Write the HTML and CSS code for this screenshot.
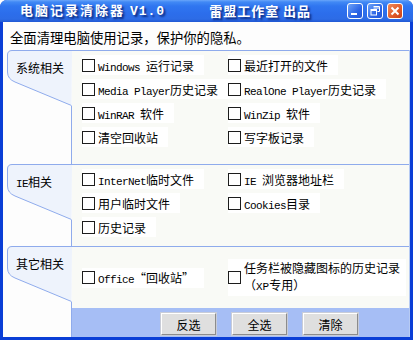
FILE: index.html
```html
<!doctype html>
<html lang="zh-CN">
  <head>
    <meta charset="UTF-8">
    <title>电脑记录清除器 V1.0</title>
    <link rel="stylesheet" href="styles.css">
  </head>
  <body>
<div class="window">
  <div class="titlebar">
    <span class="title">电脑记录清除器 <span class="ver">V1.0</span></span>
    <span class="title studio">雷盟工作室 出品</span>
    <div class="controls">
      <span class="ctl">
        <svg width="14" height="14" viewBox="0 0 14 14"><rect x="3" y="9" width="6" height="2" fill="#fff"/></svg>
      </span>
      <span class="ctl">
        <svg width="14" height="14" viewBox="0 0 14 14"><path d="M5.5 2.5h6v5h-2M5.5 4h6" fill="none" stroke="#fff"/><rect x="3" y="5.5" width="5.5" height="5.5" fill="none" stroke="#fff"/><path d="M3 6.5h5.5" stroke="#fff"/></svg>
      </span>
      <span class="ctl close">
        <svg width="14" height="14" viewBox="0 0 14 14"><path d="M3.5 3.5l7 7M10.5 3.5l-7 7" stroke="#fff" stroke-width="2"/></svg>
      </span>
    </div>
  </div>

  <div class="client">
    <p class="intro">全面清理电脑使用记录，保护你的隐私。</p>

    <div class="panel">
      <section class="group g1">
        <div class="side"><div class="tab">系统相关</div><div class="rest"></div></div>
        <div class="items">
          <label class="item"><input type="checkbox"><span><span class="en">Windows </span>运行记录</span></label>
          <label class="item"><input type="checkbox"><span>最近打开的文件</span></label>
          <label class="item"><input type="checkbox"><span><span class="en">Media Player</span>历史记录</span></label>
          <label class="item"><input type="checkbox"><span><span class="en">RealOne Player</span>历史记录</span></label>
          <label class="item"><input type="checkbox"><span><span class="en">WinRAR </span>软件</span></label>
          <label class="item"><input type="checkbox"><span><span class="en">WinZip </span>软件</span></label>
          <label class="item"><input type="checkbox"><span>清空回收站</span></label>
          <label class="item"><input type="checkbox"><span>写字板记录</span></label>
        </div>
      </section>

      <section class="group g2">
        <div class="side"><div class="tab"><span class="en">IE</span>相关</div><div class="rest"></div></div>
        <div class="items">
          <label class="item"><input type="checkbox"><span><span class="en">InterNet</span>临时文件</span></label>
          <label class="item"><input type="checkbox"><span><span class="en">IE </span>浏览器地址栏</span></label>
          <label class="item"><input type="checkbox"><span>用户临时文件</span></label>
          <label class="item"><input type="checkbox"><span><span class="en">Cookies</span>目录</span></label>
          <label class="item"><input type="checkbox"><span>历史记录</span></label>
        </div>
      </section>

      <section class="group g3">
        <div class="side"><div class="tab">其它相关</div><div class="rest"></div></div>
        <div class="items">
          <label class="item"><input type="checkbox"><span><span class="en">Office</span>“回收站”</span></label>
          <label class="item wrap"><input type="checkbox"><span class="lines"><span>任务栏被隐藏图标的历史记录</span><span>（<span class="en xp">XP</span>专用）</span></span></label>
        </div>
      </section>

      <div class="footer">
        <div class="side"><div class="rest"></div></div>
        <div class="bar">
          <button>反选</button>
          <button>全选</button>
          <button>清除</button>
        </div>
      </div>
    </div>
  </div>
</div>
  </body>
</html>
```

FILE: styles.css
```css
html, body {
  margin: 0;
  background: #fff;
  font-family: "Noto Sans CJK SC", "Liberation Sans", sans-serif;
  font-size: 12px;
  color: #000;
}
.window {
  width: 413px;
  height: 340px;
  box-sizing: border-box;
  display: flex;
  flex-direction: column;
  background: #0a3ed6;
  border-radius: 7px 7px 0 0;
  overflow: hidden;
}
.titlebar {
  height: 22px;
  flex: none;
  display: flex;
  align-items: center;
  padding-left: 20px;
  background: linear-gradient(#6aa6fa 0, #4189f5 2px, #3076f0 6px, #2c6deb 14px, #2d6ce6 19px, #2058d4 22px);
}
.title {
  color: #fff;
  font-weight: bold;
  font-size: 13px;
  letter-spacing: 2px;
  line-height: 22px;
  text-shadow: 2px 2px 2px #0c2a80;
  white-space: pre;
}
.ver {
  font-family: "Liberation Mono", monospace;
  letter-spacing: 1px;
}
.studio {
  margin-left: 44px;
  letter-spacing: 1px;
}
.controls {
  margin-left: auto;
  margin-right: 10px;
  display: flex;
  gap: 4px;
}
.ctl {
  width: 14px;
  height: 14px;
  border: 1px solid #fff;
  border-radius: 3px;
  background: linear-gradient(135deg, #6fa4f8, #2b64e6 60%, #2456d6);
  display: flex;
}
.ctl.close {
  background: linear-gradient(135deg, #f08a5a, #e05a28 60%, #c8401a);
}

.client {
  flex: 1;
  margin: 0 3px 3px 3px;
  background: #fdfdfd;
  display: flex;
  flex-direction: column;
}
.intro {
  margin: 0;
  height: 28px;
  box-sizing: border-box;
  padding: 6px 0 0 7px;
  line-height: 20px;
  font-size: 13.33px;
}
.panel {
  flex: 1;
  margin-left: 4px;
  border-right: 1px solid #b7cbf3;
  display: flex;
  flex-direction: column;
}
.group, .footer {
  display: grid;
  grid-template-columns: 65px 1fr;
}
.g1 { height: 114px; }
.g2 { height: 82px; }
.g3 { height: 62px; }
.footer { flex: 1; }

.side {
  display: flex;
  flex-direction: column;
}
.tab {
  height: 56px;
  flex: none;
  box-sizing: border-box;
  padding: 10px 0 0 9px;
  line-height: 16px;
  background: url("data:image/svg+xml,%3Csvg xmlns='http://www.w3.org/2000/svg' width='65' height='56'%3E%3Cpath d='M64.5 55.5 L8 32 Q0.5 29 0.5 22 V5 Q0.5 0.5 5 0.5 H65' fill='%23eef3fc' stroke='%238fabec'/%3E%3C/svg%3E") no-repeat;
}
.rest {
  flex: 1;
  border-right: 1px solid #8fabec;
}

.items {
  border-top: 1px solid #8fabec;
  background: #f9faf6;
  display: grid;
  grid-template-columns: 146px auto;
  row-gap: 4px;
  align-content: start;
  justify-items: start;
  padding: 4px 0 0 10px;
}
.g3 .items {
  align-content: center;
  align-items: center;
  padding-top: 0;
}
.item {
  display: flex;
  align-items: center;
  gap: 3px;
  min-height: 20px;
  padding-right: 10px;
  background: #fff;
  white-space: nowrap;
}
.item.wrap {
  width: 178px;
  box-sizing: border-box;
  line-height: 17px;
  padding: 0 4px 0 0;
}
.lines {
  display: flex;
  flex-direction: column;
}
.item input {
  appearance: none;
  margin: 0;
  width: 13px;
  height: 13px;
  flex: none;
  border: 1px solid #1c1c1c;
  background: #fff;
}
.en {
  font-family: "Liberation Mono", monospace;
  font-size: 11px;
  letter-spacing: -0.6px;
  white-space: pre;
}
.en.xp {
  letter-spacing: 0;
}

.bar {
  background: #a6bef5;
  display: flex;
  align-items: flex-start;
  gap: 16px;
  padding: 5px 0 0 89px;
}
.bar button {
  width: 55px;
  height: 22px;
  padding: 0;
  font-family: inherit;
  font-size: 12px;
  background: #dfdfdf;
  border: 1px solid;
  border-color: #fff #8c8c8c #8c8c8c #fff;
  box-shadow: 0 0 0 1px #c8ccd8;
}
```
